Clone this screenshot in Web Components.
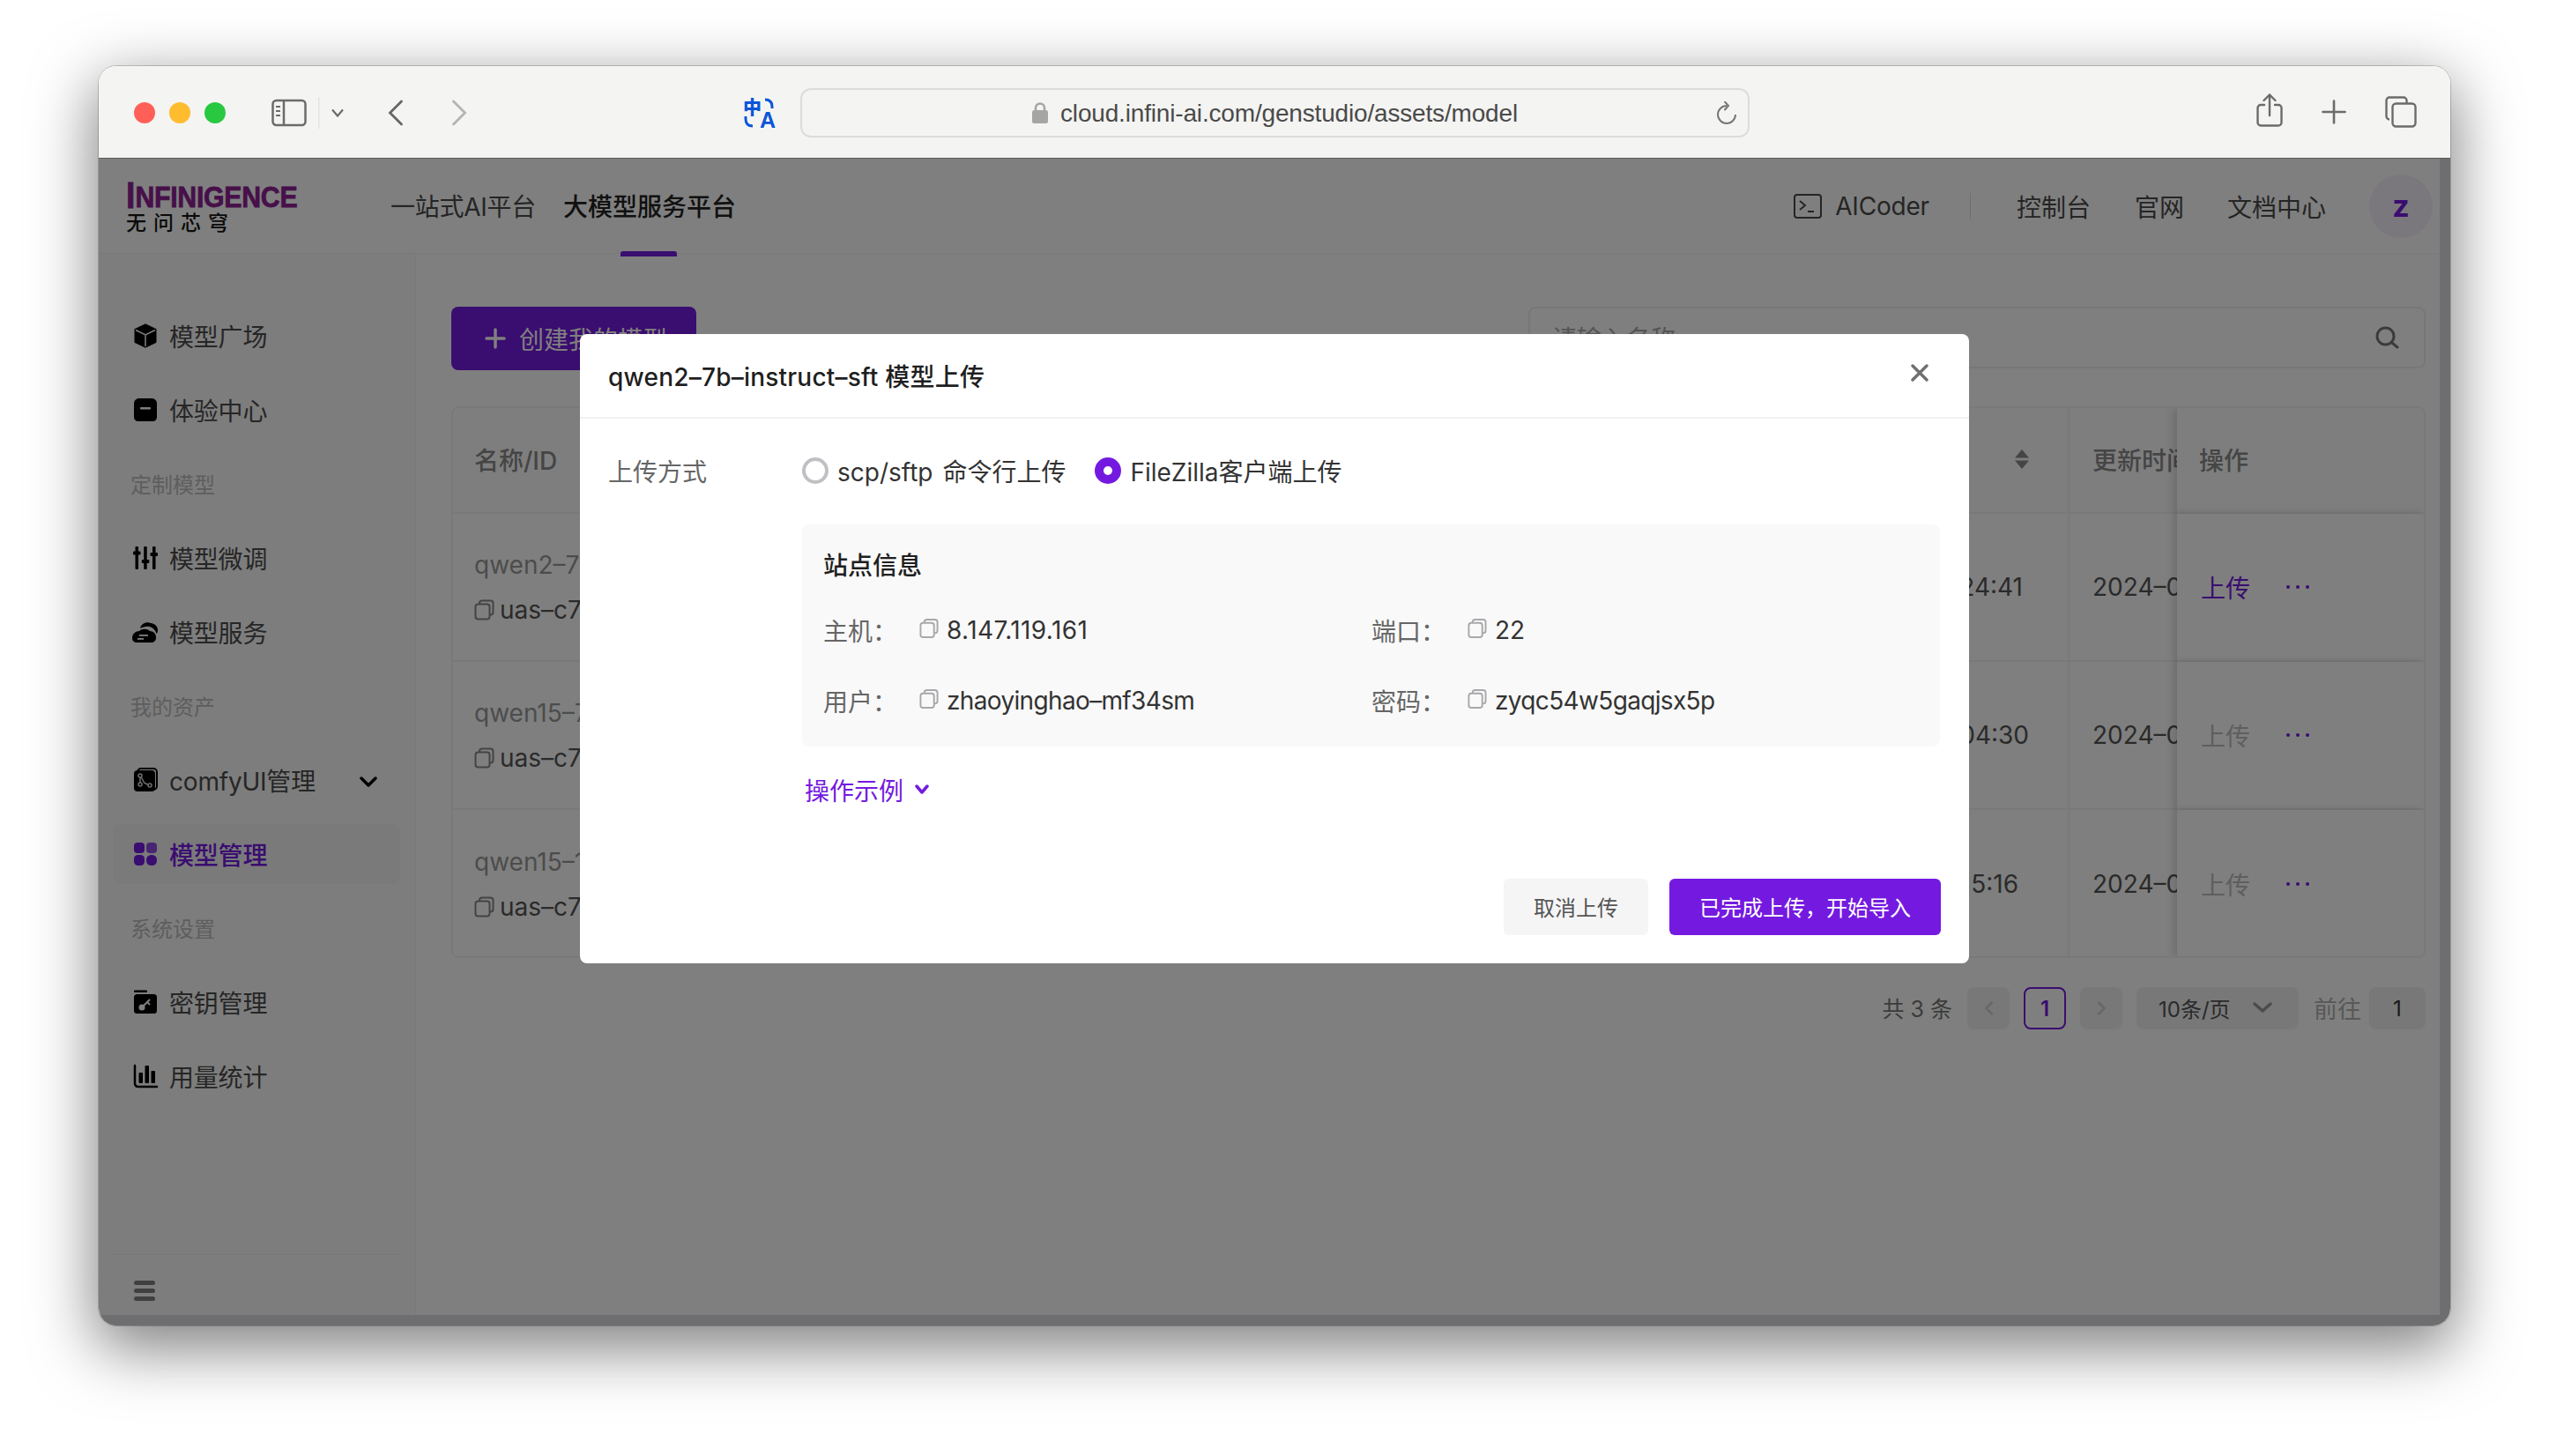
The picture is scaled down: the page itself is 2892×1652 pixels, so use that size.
<!DOCTYPE html>
<html lang="zh"><head><meta charset="utf-8"><title>Model upload</title>
<style>
html,body{margin:0;padding:0;background:#fff}
body{font-family:Inter,"Noto Sans CJK SC",sans-serif;width:2892px;height:1652px;overflow:hidden;box-sizing:border-box;padding:75px 112px 0}
</style></head><body>
<mac-window>
  <browser-bar slot="bar" url="cloud.infini-ai.com/genstudio/assets/model"></browser-bar>
  <app-header></app-header>
  <div style="display:flex;flex:1;min-height:0">
    <app-sidebar>
      <side-item icon="cube">模型广场</side-item>
      <side-item icon="box">体验中心</side-item>
      <side-label>定制模型</side-label>
      <side-item icon="sliders">模型微调</side-item>
      <side-item icon="cloud">模型服务</side-item>
      <side-label>我的资产</side-label>
      <side-item icon="comfy" caret>comfyUI管理</side-item>
      <side-item icon="grid" active>模型管理</side-item>
      <side-label>系统设置</side-label>
      <side-item icon="key">密钥管理</side-item>
      <side-item icon="chart">用量统计</side-item>
    </app-sidebar>
    <model-page></model-page>
  </div>
  <upload-modal slot="overlay" title-text="qwen2–7b–instruct–sft 模型上传"></upload-modal>
</mac-window>
<script>
const ICONS={
cube:'<path d="M16 3.5 27.5 9v14L16 28.5 4.5 23V9Z" fill="#000" stroke="#000" stroke-width="2" stroke-linejoin="round"/><path d="M5 9.5 16 15l11-5.500M16 15v13" fill="none" stroke="#fff" stroke-width="1.500"/>',
box:'<path d="M9 3h14c3.500 0 6 2.500 6 6v15c0 3-2 5-5 5H8c-3 0-5-2-5-5V9c0-3.500 2.500-6 6-6Z" fill="#000"/><rect x="10" y="13" width="12" height="2.500" rx="1" fill="#fff"/>',
sliders:'<g fill="#000"><rect x="4.500" y="3" width="3.500" height="26" rx="1"/><rect x="14.200" y="3" width="3.500" height="26" rx="1"/><rect x="24" y="3" width="3.500" height="26" rx="1"/><rect x="2" y="8.500" width="8.500" height="4" rx="1"/><rect x="11.800" y="18" width="8.500" height="4" rx="1"/><rect x="21.500" y="10" width="8.500" height="4" rx="1"/></g>',
cloud:'<path d="M10 12c1-5 7-8 12-6 4 .5 8 3 8 8 0 2-.5 3-1.500 4-1-4-4-7-8-8-4-.8-7 .2-10.500 2Z" fill="#000"/><path d="M1 23c0-5 4-8 8-8 3-3 9-3 12 0 4 0 7 3 7 7 0 4-2 6-6 6H7c-4 0-6-2-6-5Z" fill="#000"/><rect x="9" y="19" width="10" height="1.800" fill="#fff"/><rect x="7" y="23" width="7" height="1.800" fill="#fff"/>',
comfy:'<rect x="7" y="3" width="22" height="24" rx="4" fill="none" stroke="#000" stroke-width="2"/><rect x="3" y="5" width="24" height="24" rx="4" fill="#000"/><g fill="none" stroke="#ddd" stroke-width="1.500"><circle cx="10" cy="11" r="2"/><circle cx="10" cy="21" r="2"/><circle cx="21" cy="22" r="2"/><path d="M10 13v6M11.500 13l3 6 4.500 2.500"/></g>',
grid:'<g fill="#741ae0"><rect x="3" y="3" width="12" height="12" rx="4"/><rect x="17" y="3" width="12" height="12" rx="4" opacity=".78"/><rect x="3" y="17" width="12" height="12" rx="4.500"/><rect x="17" y="17" width="12" height="12" rx="5.500"/></g>',
key:'<rect x="3" y="2.500" width="15" height="2.500" rx="1" fill="#000"/><rect x="3" y="7" width="26" height="22" rx="3.500" fill="#000"/><circle cx="12" cy="22" r="3.500" fill="#fff"/><path d="M13.500 20.500 21 13M18 16l3 3" stroke="#fff" stroke-width="2" fill="none"/>',
chart:'<path d="M4 4v20c0 2.500 1.500 4 4 4h21" fill="none" stroke="#000" stroke-width="2.500" stroke-linecap="round"/><g fill="#000"><rect x="8.500" y="12" width="4.500" height="12" rx="1"/><rect x="15.500" y="4" width="4.500" height="20" rx="1"/><rect x="22.500" y="10" width="4.500" height="14" rx="1"/></g>',
copy:'<rect x="1.500" y="5.500" width="16" height="17" rx="3" fill="none" stroke="currentColor" stroke-width="2"/><path d="M6 5V4.500c0-1.700 1.200-3 3-3h9.500c1.700 0 3 1.300 3 3v10c0 1.800-1.300 3-3 3H18" fill="none" stroke="currentColor" stroke-width="2"/>'
};
function def(name,html,setup){
  customElements.define(name,class extends HTMLElement{
    connectedCallback(){
      if(this.shadowRoot)return;
      const r=this.attachShadow({mode:'open'});
      r.innerHTML=typeof html==='function'?html(this):html;
      if(setup)setup(this,r);
    }
  });
}
def('mac-window',`<style>
:host{display:block;width:2668px;height:1429px;border-radius:20px;box-shadow:0 22px 70px 4px rgba(0,0,0,.5),0 0 0 1px rgba(0,0,0,.18)}
.clip{position:relative;display:flex;flex-direction:column;width:100%;height:100%;border-radius:20px;overflow:hidden;background:#fff}
.web{position:relative;flex:1;min-height:0;display:flex;flex-direction:column}
.inner{flex:1;min-height:0;display:flex;flex-direction:column;padding-right:12px;padding-bottom:12px;background:#dddde1;background-clip:border-box}
.inner>.pane{flex:1;min-height:0;background:#fff;display:flex;flex-direction:column}
.mask{position:absolute;inset:0;z-index:5;background:rgba(0,0,0,.5);display:flex;justify-content:center;align-items:flex-start;padding-top:199px}
</style><div class="clip"><slot name="bar"></slot><div class="web"><div class="inner"><div class="pane"><slot></slot></div></div><div class="mask"><slot name="overlay"></slot></div></div></div>`);

def('browser-bar',h=>`<style>
:host{display:flex;align-items:center;position:relative;height:105px;box-sizing:border-box;background:#f4f4f2;border-bottom:1px solid #5c5c5c;flex:none;padding-left:40px;padding-top:1px}
.dots{display:flex;gap:16px}.dots i{width:24px;height:24px;border-radius:50%;display:block}
svg{display:block;flex:none}
.tr{width:34px;height:34px;color:#0b56d8;position:relative;flex:none;font-family:"Noto Sans CJK SC",sans-serif;font-weight:700}
.tr b{position:absolute;left:-1px;top:-5px;font-size:21px;line-height:28px}
.tr u{position:absolute;right:-2px;bottom:-5px;font-size:25px;line-height:28px;text-decoration:none;font-family:"Liberation Sans"}
.tr svg{position:absolute;left:0;top:0}
.url{width:1077px;height:56px;box-sizing:border-box;margin-left:30px;border:2px solid #dcdcda;border-radius:12px;display:flex;align-items:center;justify-content:center;position:relative;color:#4a4a4a;font:28px/1 "Liberation Sans",sans-serif}
.url span{margin-left:14px;position:relative;top:1px;letter-spacing:-.17px}
.url .re{position:absolute;left:1036px;top:13px}
</style>
<div class="dots"><i style="background:#ff5f57"></i><i style="background:#febc2e"></i><i style="background:#28c840"></i></div>
<svg style="margin-left:52px" width="40" height="32" viewBox="0 0 40 32" fill="none" stroke="#6b6b6b" stroke-width="2.500"><rect x="1.500" y="2" width="37" height="28" rx="4"/><path d="M14 2v28"/><path d="M5 9h5M5 14h5M5 19h5" stroke-width="2"/></svg>
<svg style="margin-left:13px" width="2" height="36" viewBox="0 0 2 36"><rect width="1.500" height="36" fill="#e3e3e1"/></svg>
<svg style="margin-left:13px" width="14" height="10" viewBox="0 0 14 10" fill="none" stroke="#6b6b6b" stroke-width="2.200"><path d="M1 1.500 7 8.500l6-7"/></svg>
<svg style="margin-left:50px" width="18" height="30" viewBox="0 0 18 30" fill="none" stroke="#666" stroke-width="2.800" stroke-linecap="round"><path d="M15.500 2 2.500 15l13 13"/></svg>
<svg style="margin-left:54px" width="18" height="30" viewBox="0 0 18 30" fill="none" stroke="#b4b4b4" stroke-width="2.800" stroke-linecap="round"><path d="M2.500 2l13 13-13 13"/></svg>
<div class="tr" style="margin-left:314px"><b>中</b><u>A</u><svg width="34" height="34" viewBox="0 0 34 34" fill="none" stroke="#0b56d8" stroke-width="3"><path d="M24 2c5 0 8 2 8 8v2M10 32c-5 0-8-2-8-8v-3"/></svg></div>
<div class="url"><svg width="18" height="24" viewBox="0 0 18 24"><rect y="9" width="18" height="15" rx="2.500" fill="#a5a5a5"/><path d="M4 10V6.500a5 5 0 0 1 10 0V10" fill="none" stroke="#a5a5a5" stroke-width="2.500"/></svg><span>${h.getAttribute('url')}</span>
<svg class="re" width="26" height="28" viewBox="0 0 26 28" fill="none" stroke="#777" stroke-width="2"><path d="M13 5a10 10 0 1 0 10 10"/><path d="M11 .5 15 5l-4 4.500" stroke-linecap="round"/></svg></div>
<svg style="position:absolute;left:2448px;top:31px" width="30" height="38" viewBox="0 0 30 38" fill="none" stroke="#6b6b6b" stroke-width="2.400" stroke-linecap="round"><path d="M9 13H5a3.500 3.500 0 0 0-3.500 3.500V33A3.500 3.500 0 0 0 5 36.500h20a3.500 3.500 0 0 0 3.500-3.500V16.500A3.500 3.500 0 0 0 25 13h-4"/><path d="M15 25V2M8.500 8 15 1.500 21.500 8"/></svg>
<svg style="position:absolute;left:2522px;top:38px" width="28" height="28" viewBox="0 0 28 28" stroke="#6b6b6b" stroke-width="2.600" stroke-linecap="round"><path d="M14 1.500v25M1.500 14h25"/></svg>
<svg style="position:absolute;left:2594px;top:34px" width="36" height="36" viewBox="0 0 36 36" fill="none" stroke="#6b6b6b" stroke-width="2.400"><path d="M5 26.500a3.500 3.500 0 0 1-3.500-3.500V5A3.500 3.500 0 0 1 5 1.500h16A3.500 3.500 0 0 1 24.500 5v3"/><rect x="8.500" y="8.500" width="26" height="26" rx="4"/></svg>`);

def('app-header',`<style>
:host{display:flex;align-items:center;height:108px;box-sizing:border-box;flex:none;border-bottom:1px solid #f4f4f4;padding:0 8px 0 31px;color:#4a4a4a;font-size:28px;position:relative}
.logo{width:300px;flex:none;align-self:flex-start;padding-top:28px;height:60px;position:relative}
.en{display:block;height:26px;font:900 34px/26px "Liberation Sans",sans-serif;color:#8e2094;white-space:nowrap;transform-origin:0 50%;transform:scaleX(.89);letter-spacing:-.3px;-webkit-text-stroke:.8px #8e2094}
.en b{font-size:42px;position:relative;top:1px;letter-spacing:0}
.cn{display:block;margin-top:5px;font:500 23px/24px "Noto Sans CJK SC",sans-serif;letter-spacing:8px;color:#141414;white-space:nowrap}
.nav{display:flex;gap:31px;position:relative;top:-1px}
.nav span:first-child{letter-spacing:-.25px}
.nav .on{color:#222;font-weight:500;position:relative}
.nav .on::after{content:"";position:absolute;left:65px;width:64px;height:6px;bottom:-38px;background:#741ae0;border-radius:3px 3px 0 0}
.r{margin-left:auto;display:flex;align-items:center}
.nav span{white-space:nowrap}
.sep{width:1px;height:30px;background:#ddd;margin:0 52px 0 46px}
.ai{display:flex;align-items:center;gap:15px}
.ai span{letter-spacing:-.2px}
.lk{margin-right:50px;white-space:nowrap}
.av{width:72px;height:72px;border-radius:50%;background:#f4f0fa;color:#741ae0;font-weight:700;font-size:34px;display:flex;align-items:center;justify-content:center;margin-left:-1px}
</style>
<div class="logo"><span class="en"><b>I</b>NFINIGENCE</span><span class="cn">无问芯穹</span></div>
<div class="nav"><span>一站式AI平台</span><span class="on">大模型服务平台</span></div>
<div class="r"><div class="ai"><svg width="32" height="28" viewBox="0 0 32 28" fill="none" stroke="#4a4a4a" stroke-width="2"><rect x="1" y="1" width="30" height="26" rx="3"/><path d="M7 8l6 5-6 5M16 20h7"/></svg><span>AICoder</span></div><i class="sep"></i><span class="lk">控制台</span><span class="lk" style="margin-right:49px">官网</span><span class="lk">文档中心</span><div class="av">z</div></div>`);

def('app-sidebar',`<style>
:host{display:flex;flex-direction:column;width:360px;flex:none;box-sizing:border-box;background:#fafafa;border-right:1px solid #f0f0f0;padding-top:59px}
.list{display:flex;flex-direction:column;gap:16px}
.foot{margin:auto 17px 0 16px;border-top:1px solid #eee;height:69px;box-sizing:border-box;padding:29px 0 0 24px;display:flex;flex-direction:column;gap:4px}
.foot i{display:block;width:24px;height:5px;border-radius:3px;background:#808080}
</style><div class="list"><slot></slot></div><div class="foot"><i></i><i></i><i></i></div>`);

def('side-item',h=>`<style>
:host{display:flex;align-items:center;height:68px;margin:0 17px 0 16px;padding-left:21px;gap:11px;font-size:28px;color:#4c4c4c;border-radius:8px;position:relative;white-space:nowrap}
:host([active]){background:#f5f5f7;color:#741ae0;font-weight:500}
.c{position:absolute;right:26px;top:30px}
svg{flex:none}
span{letter-spacing:-.2px}
</style><svg width="32" height="32" viewBox="0 0 32 32">${ICONS[h.getAttribute('icon')]}</svg><span><slot></slot></span>${h.hasAttribute('caret')?'<svg class="c" width="20" height="12" viewBox="0 0 20 12" fill="none" stroke="#000" stroke-width="3.500" stroke-linecap="round" stroke-linejoin="round"><path d="M2 2l8 8 8-8"/></svg>':''}`);

def('side-label',`<style>:host{display:flex;align-items:center;height:68px;margin-left:36px;font-size:24px;color:#bcbcbc}span{position:relative;top:-1px}</style><span><slot></slot></span>`);

def('model-page',`<style>
:host{display:flex;flex-direction:column;flex:1;min-width:0;padding:60px 16px 0 40px;box-sizing:border-box}
.top{display:flex;justify-content:space-between;align-items:flex-start}
.btn{height:72px;width:278px;box-sizing:border-box;background:#741ae0;color:#fff;border-radius:8px;display:flex;align-items:center;font-size:28px;padding-left:38px;gap:15px;white-space:nowrap}
.s{width:1018px;height:70px;box-sizing:border-box;border:2px solid #eee;border-radius:8px;display:flex;align-items:center;padding:0 28px 0 25px;color:#aaa;font-size:28px;justify-content:space-between}
</style>
<div class="top"><div class="btn"><svg width="24" height="24" viewBox="0 0 24 24" stroke="#fff" stroke-width="3.500" stroke-linecap="round"><path d="M12 2v20M2 12h20"/></svg>创建我的模型</div>
<div class="s"><span>请输入名称</span><svg width="28" height="28" viewBox="0 0 28 28" fill="none" stroke="#777" stroke-width="3" stroke-linecap="round"><circle cx="12.500" cy="12.500" r="9.500"/><path d="M20 20l6 5"/></svg></div></div>
<model-table></model-table><model-pager></model-pager>`);

def('model-table',()=>{
 const rows=[['qwen2–7b','24:41',51,'#741ae0'],['qwen15–7','04:30',44,'#bdbdbd'],['qwen15–1','15:16',56,'#bdbdbd']];
 return `<style>
:host{display:grid;grid-template-columns:400px 1fr 122px 280px;grid-template-rows:120px repeat(3,168px);margin-top:41px;border:2px solid #f2f2f2;border-radius:8px;overflow:hidden;font-size:28px;color:#555;box-sizing:border-box;height:626px}
.c{box-sizing:border-box;border-bottom:2px solid #f3f3f3;display:flex;align-items:center;white-space:nowrap;overflow:hidden;min-width:0}
.last{border-bottom:0}
.h{background:#fcfcfc;color:#8a8a8a;font-weight:500;padding-bottom:2px}
.n{padding-left:24px}
.nm{flex-direction:column;align-items:flex-start;justify-content:center;padding-left:24px;gap:21px;color:#999}
.nm div{display:flex;align-items:center;gap:6px;color:#555;line-height:30px}.nm div svg{color:#888}.nm>span{line-height:30px}
.t{justify-content:flex-end;border-right:2px solid #f3f3f3}
.u{padding-left:26px}
.o{position:relative;z-index:1;background:#fff;box-shadow:-4px 0 10px rgba(0,0,0,.15);padding-left:25px}
.a{margin-left:2px}
.h.o{background:#fcfcfc}
.d{display:flex;gap:7px;margin-left:41px}.d i{width:4px;height:4px;border-radius:50%;background:#741ae0}
</style>
<div class="c h n">名称/ID</div><div class="c h t" style="padding-right:43px"><svg width="18" height="24" viewBox="0 0 18 24" fill="#8a8a8a"><path d="M9 1l8 9.500H1zM9 23 1 13.500h16z"/></svg></div><div class="c h u">更新时间</div><div class="c h o">操作</div>
${rows.map((r,i)=>{const l=i==2?' last':'';return `<div class="c nm${l}"><span>${r[0]}</span><div><svg width="23" height="24" viewBox="0 0 23 24">${ICONS.copy}</svg>uas–c7</div></div><div class="c t${l}" style="padding-right:${r[2]}px">${r[1]}</div><div class="c u${l}">2024–0</div><div class="c o${l}"><span class="a" style="color:${r[3]}">上传</span><span class="d"><i></i><i></i><i></i></span></div>`}).join('')}`;
});

def('model-pager',`<style>
:host{display:flex;justify-content:flex-end;align-items:center;height:48px;margin-top:33px;font-size:25px;color:#777;white-space:nowrap}
.b{width:48px;height:48px;box-sizing:border-box;background:#f0f0f0;border-radius:8px;display:flex;align-items:center;justify-content:center;margin-left:16px;color:#cfcfcf}
.a{background:none;border:2px solid #741ae0;color:#741ae0;font-weight:600;font-size:24px}
.sel{width:184px;height:48px;background:#f0f0f0;border-radius:8px;margin-left:16px;display:flex;align-items:center;padding:0 30px 2px 25px;box-sizing:border-box;justify-content:space-between;color:#555;font-size:24px}
.to{margin:0 9px 2px 17px;color:#b0b0b0;font-size:27px}
.in{width:64px;height:48px;background:#f0f0f0;border-radius:8px;display:flex;align-items:center;justify-content:center;color:#333;font-size:24px}
</style><span style="margin:0 1px 2px 0">共 3 条</span>
<div class="b"><svg width="11" height="18" viewBox="0 0 11 18" fill="none" stroke="currentColor" stroke-width="2.500"><path d="M9.500 2 2.500 9l7 7"/></svg></div>
<div class="b a">1</div>
<div class="b"><svg width="11" height="18" viewBox="0 0 11 18" fill="none" stroke="currentColor" stroke-width="2.500"><path d="M1.500 2l7 7-7 7"/></svg></div>
<div class="sel"><span>10条/页</span><svg width="22" height="12" viewBox="0 0 22 12" fill="none" stroke="#999" stroke-width="3.500" stroke-linecap="round" stroke-linejoin="round"><path d="M2 2l9 8 9-8"/></svg></div>
<span class="to">前往</span><div class="in">1</div>`);

def('copy-field',h=>`<style>
:host{display:flex;align-items:center;height:40px;font-size:28px;color:#333;white-space:nowrap}
.l{width:109px;color:#666;flex:none}
.v{letter-spacing:${h.getAttribute('sp')||'-.65px'}}
svg{color:#a8a8ac;flex:none;margin-right:9px;position:relative;top:-2px}
</style><span class="l">${h.getAttribute('label')}</span><svg width="22" height="24" viewBox="0 0 23 24">${ICONS.copy}</svg><span class="v"><slot></slot></span>`);

def('radio-opt',h=>`<style>
:host{display:flex;align-items:center;gap:10px;color:#333;white-space:nowrap;word-spacing:3px}
i{width:30px;height:30px;border-radius:50%;box-sizing:border-box;border:4px solid #c0c0c4;display:block}
:host([on]) i{border:10px solid #741ae0;background:#fff}
</style><i></i><span><slot></slot></span>`);

def('upload-modal',h=>`<style>
:host{display:block;width:1576px;height:714px;box-sizing:border-box;background:#fff;border-radius:8px;font-size:28px;color:#1f1f1f;position:relative}
.hd{height:96px;box-sizing:border-box;border-bottom:2px solid #f1f1f1;display:flex;align-items:center;justify-content:space-between;padding:0 46px 2px 32px;font-weight:500}
.hd span{position:relative;top:1px;letter-spacing:.22px}
.hd svg{position:relative;top:-2px}
.row{display:flex;margin:39px 33px 0 32px;height:40px;align-items:center}
.lb{width:220px;color:#666;flex:none}
.opts{display:flex;gap:33px}
.info{margin:41px 33px 0 252px;height:252px;box-sizing:border-box;background:#f9f9f9;border-radius:8px;padding:27px 24px 0}
.tt{font-weight:500;line-height:40px;margin-bottom:33px}
.gr{display:grid;grid-template-columns:622px 1fr;row-gap:40px}
.more{margin:29px 0 0 255px;height:40px;display:flex;align-items:center;gap:13px;color:#741ae0}
.ft{display:flex;justify-content:flex-end;gap:24px;margin:81px 32px 0 0}
.b{height:64px;box-sizing:border-box;padding-bottom:2px;border-radius:6px;display:flex;align-items:center;justify-content:center;font-size:24px}
.c{width:164px;background:#f5f5f5;color:#555}
.p{width:308px;background:#741ae0;color:#fff}
</style>
<div class="hd"><span>${h.getAttribute('title-text')}</span><svg width="20" height="20" viewBox="0 0 20 20" stroke="#6f6f73" stroke-width="3.400" stroke-linecap="round"><path d="M2 2l16 16M18 2 2 18"/></svg></div>
<div class="row"><span class="lb">上传方式</span><div class="opts"><radio-opt>scp/sftp 命令行上传</radio-opt><radio-opt on>FileZilla客户端上传</radio-opt></div></div>
<div class="info"><div class="tt">站点信息</div><div class="gr">
<copy-field label="主机：" sp=".4px">8.147.119.161</copy-field><copy-field label="端口：" sp="0">22</copy-field>
<copy-field label="用户：">zhaoyinghao–mf34sm</copy-field><copy-field label="密码：">zyqc54w5gaqjsx5p</copy-field></div></div>
<div class="more"><span>操作示例</span><svg width="16" height="12" viewBox="0 0 16 12" fill="none" stroke="#741ae0" stroke-width="3.500" stroke-linecap="round" stroke-linejoin="round"><path d="M2 2l6 7 6-7"/></svg></div>
<div class="ft"><div class="b c">取消上传</div><div class="b p">已完成上传，开始导入</div></div>`);
</script>
</body></html>
